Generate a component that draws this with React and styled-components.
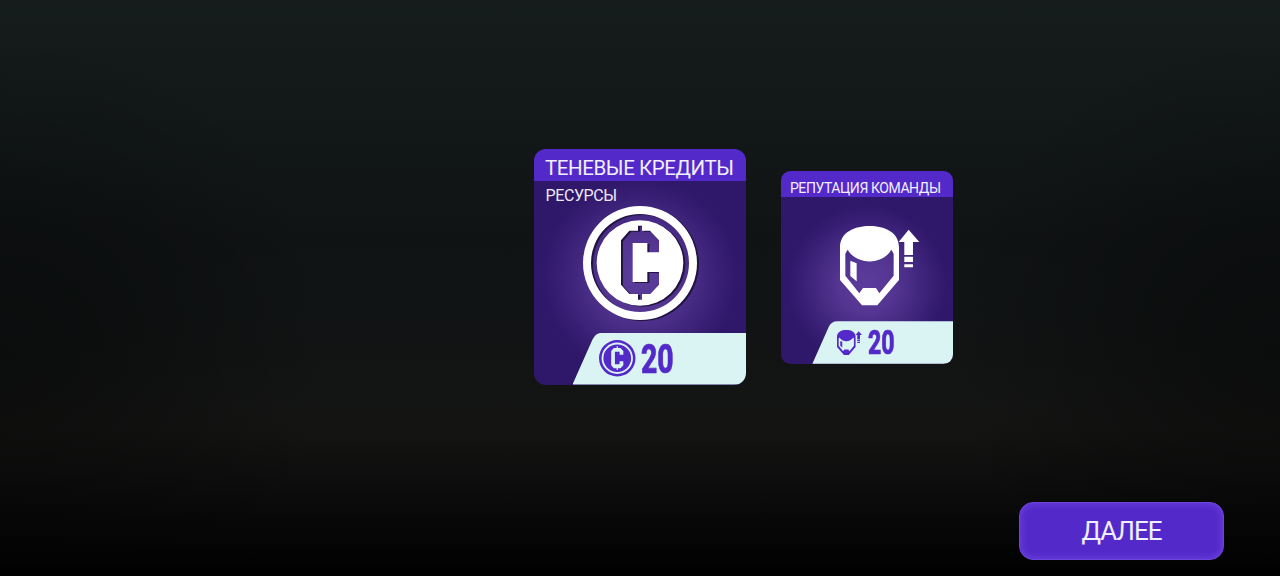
import styled, { createGlobalStyle } from "styled-components";

const rewards = [
  { id: "credits", title: "ТЕНЕВЫЕ КРЕДИТЫ", type: "РЕСУРСЫ", amount: 20, active: true },
  { id: "reputation", title: "РЕПУТАЦИЯ КОМАНДЫ", amount: 20, active: false },
];

const CoinIcon = () => (
  <svg viewBox="24 19 342 342" fill="currentColor" fillRule="evenodd">
    <path d="M24 190a171 171 0 1 0 342 0a171 171 0 1 0 -342 0ZM48 190a147 147 0 1 0 294 0a147 147 0 1 0 -294 0Z" />
    <path d="M65 190a130 128 0 1 0 260 0a130 128 0 1 0 -260 0ZM189 78H201V93H225L252 122V158H217V130H173V247H217V217H252V255L226 283H201V300H189V283H163L138 255V122L163 93H189Z" />
  </svg>
);

const HelmetIcon = () => (
  <svg viewBox="30 34 238 238" fill="currentColor" fillRule="evenodd">
    <path d="M30 98C30 52 75 34 119 34S207 52 207 98V196L142 272H96L30 196ZM53 105L46 117V183L88 236L99 220H138L148 236L191 183V117L184 105C158 152 80 152 53 105Z" />
    <path d="M61 138L80 146V200L61 184Z" />
    <path d="M236 45L268 82H249V121H223V82H206ZM223 126H249V142H223ZM223 149H249V158H223Z" />
  </svg>
);

const icons = { credits: CoinIcon, reputation: HelmetIcon };

const RewardCard = ({ reward }) => {
  const Icon = icons[reward.id];
  const k = reward.active ? 1 : 0.815;

  return (
    <Card $k={k} $active={reward.active}>
      <Header $k={k}>
        <Title $active={reward.active}>{reward.title}</Title>
      </Header>
      <Body $active={reward.active}>
        {reward.type && <Type>{reward.type}</Type>}
        <Emblem $active={reward.active}>
          <Icon />
        </Emblem>
      </Body>
      <Footer $k={k}>
        <SmallIcon $active={reward.active}>
          <Icon />
        </SmallIcon>
        <Amount $k={k}>{reward.amount}</Amount>
      </Footer>
    </Card>
  );
};

const App = () => (
  <>
    <GlobalStyle />
    <Screen>
      <Rewards>
        {rewards.map((reward) => (
          <RewardCard key={reward.id} reward={reward} />
        ))}
      </Rewards>
      <Actions>
        <NextBtn>ДАЛЕЕ</NextBtn>
      </Actions>
    </Screen>
  </>
);

export default App;

const GlobalStyle = createGlobalStyle`
  * {
    box-sizing: border-box;
  }
  body {
    margin: 0;
    background: #000;
    font-family: Roboto, "Noto Sans", sans-serif;
  }
  svg {
    display: block;
    width: 100%;
    height: 100%;
    overflow: visible;
  }
`;

const Screen = styled.main`
  display: flex;
  flex-direction: column;
  width: 1280px;
  height: 576px;
  overflow: hidden;
  background:
    radial-gradient(ellipse 340px 330px at 0 62%, rgba(0, 0, 0, 0.4), transparent),
    radial-gradient(ellipse 340px 330px at 100% 62%, rgba(0, 0, 0, 0.4), transparent),
    linear-gradient(#151c1c 0, #131818 110px, #101314 240px, #121414 360px, #141513 430px, #0b0c0b 490px, #010101 570px);
`;

const Rewards = styled.section`
  display: flex;
  align-items: center;
  gap: 35.5px;
  height: 502px;
  padding: 31px 0 0 534px;
`;

const Card = styled.article`
  display: flex;
  flex-direction: column;
  width: ${({ $k }) => 211.5 * $k}px;
  height: ${({ $k }) => 236 * $k}px;
  margin-top: ${({ $active }) => ($active ? "0" : "2px")};
  border-radius: ${({ $k }) => 12 * $k}px;
  background: radial-gradient(
    circle at 50% ${({ $active }) => ($active ? "54%" : "59%")},
    #5c3d9d 0,
    #543592 ${({ $k }) => 35 * $k}px,
    #3c2278 ${({ $k }) => 74 * $k}px,
    #2f1769 ${({ $k }) => 98 * $k}px
  );
  overflow: hidden;
`;

const Header = styled.header`
  display: flex;
  align-items: center;
  flex-shrink: 0;
  height: ${({ $k }) => 32 * $k}px;
  padding: ${({ $k }) => `${8 * $k}px 0 0 ${11 * $k}px`};
  background: #5429c9;
`;

const Title = styled.h2`
  margin: 0;
  color: #f3efff;
  font-size: ${({ $active }) => ($active ? "20.5px" : "14px")};
  font-weight: 400;
  letter-spacing: ${({ $active }) => ($active ? "-0.42px" : "-0.43px")};
  line-height: 1;
  white-space: nowrap;
`;

const Body = styled.div`
  display: flex;
  flex-direction: column;
  flex: 1;
  padding: ${({ $active }) => ($active ? "7px 0 0 11.5px" : "29px 0 0 59px")};
`;

const Type = styled.span`
  height: 18px;
  color: #eee9fa;
  font-size: 16px;
  letter-spacing: -0.4px;
  line-height: 15px;
`;

const Emblem = styled.div`
  width: ${({ $active }) => ($active ? 114 : 79.3)}px;
  height: ${({ $active }) => ($active ? 114 : 79.3)}px;
  margin-left: ${({ $active }) => ($active ? "37.5px" : "0")};
  color: #fff;
  filter: ${({ $active }) => ($active ? "drop-shadow(2px 1.5px 0.3px #211440)" : "none")};
`;

const Footer = styled.footer`
  display: flex;
  align-items: center;
  flex-shrink: 0;
  gap: ${({ $k }) => ($k === 1 ? 5.5 : 6)}px;
  height: ${({ $k }) => 52 * $k}px;
  margin-left: ${({ $k }) => 38.5 * $k}px;
  padding-left: ${({ $k }) => ($k === 1 ? 26.5 : 24.5)}px;
  color: #5429c9;
  background: #d9f4f3;
  clip-path: ${({ $k }) =>
    `path("M0 ${52 * $k}L${20 * $k} ${7 * $k}Q${23 * $k} 0 ${31 * $k} 0H${174 * $k}V${52 * $k}Z")`};
`;

const SmallIcon = styled.div`
  width: ${({ $active }) => ($active ? 36.5 : 25)}px;
  height: ${({ $active }) => ($active ? 36.5 : 25)}px;
`;

const Amount = styled.span`
  padding-top: 1px;
  font-size: ${({ $k }) => 41 * $k}px;
  font-weight: 800;
  line-height: 1;
  -webkit-text-stroke: 0.7px currentColor;
  transform: scaleX(0.69);
  transform-origin: left;
`;

const Actions = styled.footer`
  display: flex;
  justify-content: flex-end;
  padding-right: 56px;
`;

const NextBtn = styled.button`
  width: 205px;
  height: 58px;
  padding: 0 0 1px;
  border: 1px solid #6d43e0;
  border-radius: 14px;
  background: #5429c9;
  box-shadow: inset 0 0 7px 1px #6b42de;
  color: #eef0ff;
  font-family: inherit;
  font-size: 26px;
  font-weight: 400;
  letter-spacing: -1px;
  line-height: 1;
`;
